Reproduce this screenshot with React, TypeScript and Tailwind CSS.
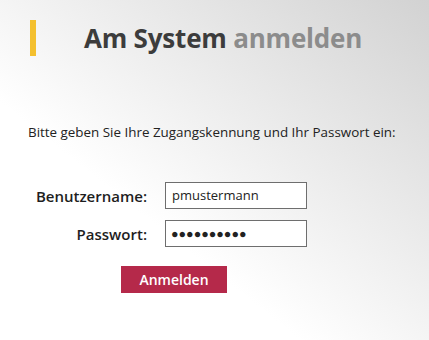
export default function App() {
    return (
        <div className="w-[429px] h-[340px] overflow-hidden bg-[linear-gradient(to_top_right,#ffffff_35%,#d2d2d2)] font-['Open_Sans',sans-serif]">

            {/* heading */}
            <div className="flex items-center pt-[20px] pl-[30px]">
                <div className="w-[6px] h-[36px] bg-[#f4c02f]" />
                <h1 className="ml-[48px] text-[26px] font-bold leading-none tracking-[-0.2px]">
                    <span className="text-[#3c3c3c]">Am System</span>{" "}
                    <span className="text-[#8c8c8c]">anmelden</span>
                </h1>
            </div>

            <p className="mt-[70px] pl-[28px] text-[13.4px] font-medium text-[#222] leading-none">
                Bitte geben Sie Ihre Zugangskennung und Ihr Passwort ein:
            </p>

            <div className="mt-[43px] grid grid-cols-[147px_142px] gap-x-[18px] gap-y-[11px] items-center">
                <label className="justify-self-end text-[15px] font-semibold text-[#1e1e1e]">
                    Benutzername:
                </label>
                <div className="h-[27px] border border-[#6e6e6e] bg-white flex items-center px-[6px] text-[13px] text-[#222]">
                    pmustermann
                </div>

                <label className="justify-self-end text-[15px] font-semibold text-[#1e1e1e]">
                    Passwort:
                </label>
                <div className="h-[27px] border border-[#6e6e6e] bg-white flex items-center px-[5px] text-[12.5px] text-[#222]">
                    ●●●●●●●●●●
                </div>
            </div>

            <div className="mt-[19px] pl-[121px]">
                <button className="w-[106px] h-[27px] bg-[#b5294a] text-white text-[14px] font-semibold">
                    Anmelden
                </button>
            </div>
        </div>
    )
}
